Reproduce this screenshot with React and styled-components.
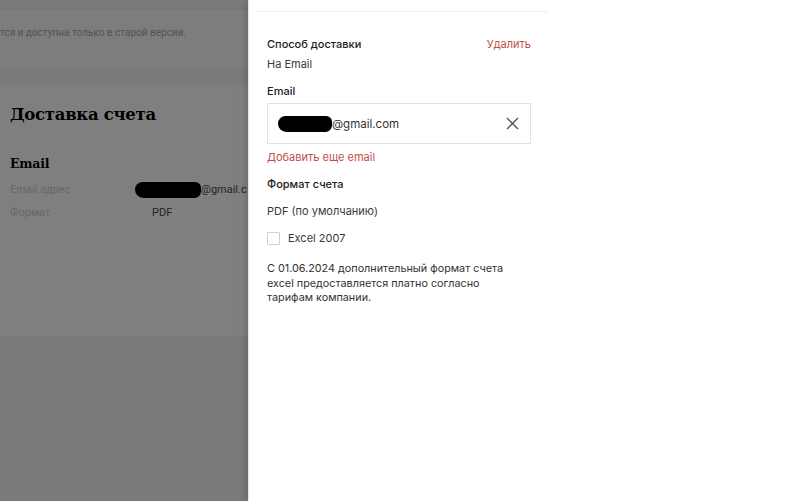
import React from "react";
import styled, { createGlobalStyle } from "styled-components";

const Global = createGlobalStyle`
  html, body { margin: 0; padding: 0; }
  body { width: 800px; height: 501px; overflow: hidden; background: #f4f4f4; font-family: Inter, "Noto Sans", sans-serif; }
`;

const Page = styled.div`
  position: relative;
  width: 800px;
  height: 501px;
  overflow: hidden;
  background: #f4f4f4;
`;

const Notice = styled.div`
  height: 62px;
  margin-top: 8px;
  background: #fafafa;
  border-top: 1px solid #eee;
  display: flex;
  align-items: flex-start;
  padding-top: 18px;
  box-sizing: border-box;
`;

const NoticeText = styled.span`
  font-family: Roboto, "Noto Sans", sans-serif;
  font-size: 10px;
  color: #a8a8a8;
  white-space: nowrap;
`;

const Card = styled.section`
  margin-top: 14px;
  height: 252px;
  background: #fff;
  padding: 20px 10px 0;
  box-sizing: border-box;
`;

const Heading = styled.h1`
  margin: 0;
  font-family: "DejaVu Serif", serif;
  font-weight: 700;
  font-size: 16.5px;
  letter-spacing: -0.3px;
  line-height: 22px;
  color: #000;
`;

const SubHeading = styled.h2`
  margin: 30px 0 11px;
  font-family: "DejaVu Serif", serif;
  font-weight: 700;
  font-size: 12.5px;
  letter-spacing: -0.2px;
  color: #000;
`;

const InfoGrid = styled.div`
  display: grid;
  grid-template-columns: 142px 1fr;
  row-gap: 7px;
  font-family: Roboto, "Noto Sans", sans-serif;
  font-size: 11px;
  line-height: 16px;
`;

const InfoLabel = styled.span`
  color: #cfcfcf;
`;

const InfoValue = styled.span`
  color: #4a4a4a;
  white-space: nowrap;
  display: flex;
  align-items: center;
`;

const Blot = styled.span`
  display: inline-block;
  width: ${(p) => p.$w}px;
  height: ${(p) => p.$h}px;
  margin-left: ${(p) => p.$shift || 0}px;
  background: #000;
  border-radius: 8px 6px 7px 9px;
`;

const Overlay = styled.div`
  position: absolute;
  inset: 0;
  background: rgba(0, 0, 0, 0.5);
`;

const Drawer = styled.aside`
  position: absolute;
  top: 0;
  right: 0;
  bottom: 0;
  width: 552px;
  background: #fff;
  box-shadow: -3px 0 6px rgba(0, 0, 0, 0.12);
  border-left: 1px solid #e4e4e4;
  box-sizing: border-box;
`;

const DrawerTop = styled.div`
  height: 11px;
  margin: 0 4px 0 6px;
  width: 292px;
  border-bottom: 1px solid #eeeeee;
`;

const DrawerBody = styled.div`
  width: 264px;
  padding: 25px 0 0 18px;
  font-family: Inter, "Noto Sans", sans-serif;
  font-size: 11px;
  color: #333;
`;

const Row = styled.div`
  display: flex;
  justify-content: space-between;
  align-items: center;
  line-height: 14px;
`;

const Label = styled.div`
  font-weight: 500;
  color: #222;
  line-height: 14px;
  margin-top: ${(p) => p.$mt || 0}px;
`;

const Text = styled.div`
  color: #3a3a3a;
  line-height: 14px;
  margin-top: ${(p) => p.$mt || 0}px;
`;

const LinkButton = styled.button`
  border: 0;
  padding: 0;
  background: none;
  font: inherit;
  color: #c0504a;
  cursor: pointer;
  line-height: 14px;
  margin-top: ${(p) => p.$mt || 0}px;
  text-align: left;
  display: block;
`;

const InputBox = styled.div`
  margin-top: 5px;
  height: 41px;
  box-sizing: border-box;
  border: 1px solid #e2e2e2;
  display: flex;
  align-items: center;
  padding: 0 10px 0 10px;
  font-size: 11.5px;
  color: #333;
`;

const InputValue = styled.div`
  flex: 1;
  display: flex;
  align-items: center;
`;

const ClearButton = styled.button`
  border: 0;
  background: none;
  padding: 0;
  width: 16px;
  height: 16px;
  display: flex;
  align-items: center;
  justify-content: center;
  color: #555;
  cursor: pointer;
`;

const CheckRow = styled.label`
  display: flex;
  align-items: center;
  gap: 8px;
  margin-top: 13px;
  color: #3a3a3a;
  line-height: 14px;
`;

const Box = styled.span`
  width: 11px;
  height: 11px;
  border: 1px solid #cfcfcf;
  border-radius: 1px;
  display: inline-block;
`;

const Note = styled.p`
  margin: 17px 0 0;
  line-height: 14.5px;
  color: #333;
  font-size: 10.8px;
`;

export default function App() {
  return (
    <>
      <Global />
      <Page>
        <Notice>
          <NoticeText>тся и доступна только в старой версии.</NoticeText>
        </Notice>
        <Card>
          <Heading>Доставка счета</Heading>
          <SubHeading>Email</SubHeading>
          <InfoGrid>
            <InfoLabel>Email адрес</InfoLabel>
            <InfoValue>
              <Blot $w={66} $h={16} $shift={-17} />
              @gmail.c
            </InfoValue>
            <InfoLabel>Формат</InfoLabel>
            <InfoValue>PDF</InfoValue>
          </InfoGrid>
        </Card>
        <Overlay />
        <Drawer>
          <DrawerTop />
          <DrawerBody>
            <Row>
              <Label>Способ доставки</Label>
              <LinkButton>Удалить</LinkButton>
            </Row>
            <Text $mt={6}>На Email</Text>
            <Label $mt={13}>Email</Label>
            <InputBox>
              <InputValue>
                <Blot $w={54} $h={16} />
                @gmail.com
              </InputValue>
              <ClearButton aria-label="clear">
                <svg width="13" height="13" viewBox="0 0 13 13">
                  <path d="M1 1 L12 12 M12 1 L1 12" stroke="#555" strokeWidth="1.4" />
                </svg>
              </ClearButton>
            </InputBox>
            <LinkButton $mt={6}>Добавить еще email</LinkButton>
            <Label $mt={13}>Формат счета</Label>
            <Text $mt={13}>PDF (по умолчанию)</Text>
            <CheckRow>
              <Box />
              Excel 2007
            </CheckRow>
            <Note>
              С 01.06.2024 дополнительный формат счета
              <br />
              excel предоставляется платно согласно
              <br />
              тарифам компании.
            </Note>
          </DrawerBody>
        </Drawer>
      </Page>
    </>
  );
}
